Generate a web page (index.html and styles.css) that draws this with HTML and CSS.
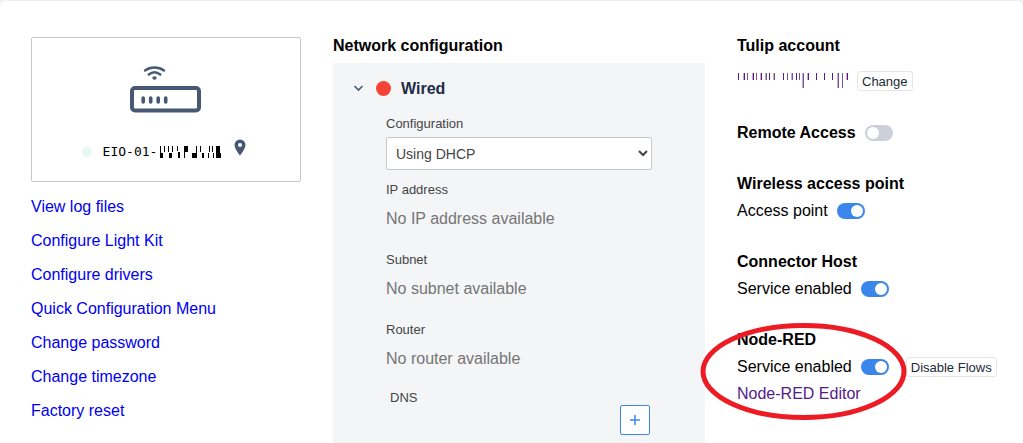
FILE: index.html
```html
<!DOCTYPE html>
<html lang="en">
<head>
    <meta charset="utf-8">
    <meta name="viewport" content="width=device-width, initial-scale=1.0">
    <title>Edge IO Configuration</title>
    <link rel="stylesheet" href="styles.css">
</head>

<body>
    <main class="page">
        <div class="device-column">
            <div class="device-card">
                <svg class="router-icon" width="72" height="50" viewBox="0 0 72 50" fill="none" stroke="#475872" stroke-linecap="round">
                    <rect x="2" y="23" width="67" height="22.500" rx="3" stroke-width="4"/>
                    <path d="M13.2 33v4M20.7 33v4M28.2 33v4M35.7 33v4" stroke-width="3.6"/>
                    <path d="M15 5.5c5.500-4 13.500-4 19 0M18.700 9.500c3.500-2.700 8.100-2.700 11.600 0" stroke-width="2.400"/>
                    <ellipse cx="24.500" cy="13" rx="2.200" ry="1.800" fill="#475872" stroke="none"/>
                </svg>
                <div class="device-name">
                    <span class="device-status"></span>
                    <span class="device-id">EIO-01-<svg class="device-serial" width="62" height="14" viewBox="0 0 62 14" shape-rendering="crispEdges">
                        <path d="M0 1h1v7h2v5H0zM4 1h1v6H4zM8 1h1v6H8zM9 8h3v5H9zM12 1h1v6h-1zM17 1h1v5h-1zM18 7h2v6h-2zM24 1h4v6h-3v6h-1zM36 1h1v7h-1zM32 8h5v5h-5zM40 1h1v6h-1zM42 8h2v5h-2zM49 1h1v6h-1zM52 1h1v6h-1zM48 8h1v5h-1zM53 8h1v5h-1zM56 1h4v7h1v5h-5z"/>
                    </svg></span>
                    <svg class="pin-icon" width="12" height="17" viewBox="0 0 12 17">
                        <path fill="#475872" fill-rule="evenodd" d="M6 .5A5.500 5.500 0 0 0 .5 6C.5 10 6 16.500 6 16.500S11.500 10 11.500 6A5.500 5.500 0 0 0 6 .5zM6 8a2 2 0 1 1 0-4 2 2 0 0 1 0 4z"/>
                    </svg>
                </div>
            </div>
            <nav class="device-links">
                <a href="#">View log files</a>
                <a href="#">Configure Light Kit</a>
                <a href="#">Configure drivers</a>
                <a href="#">Quick Configuration Menu</a>
                <a href="#">Change password</a>
                <a href="#">Change timezone</a>
                <a href="#">Factory reset</a>
            </nav>
        </div>

        <div class="network-column">
            <h2>Network configuration</h2>
            <section class="network-panel">
                <div class="network-title">
                    <svg width="11" height="7" viewBox="0 0 11 7" fill="none" stroke="#475872" stroke-width="1.6">
                        <path d="M1.500 1l4 4 4-4"/>
                    </svg>
                    <span class="network-status"></span>
                    <h3>Wired</h3>
                </div>
                <div class="network-fields">
                    <label class="field-label" for="configuration">Configuration</label>
                    <select class="field-select" id="configuration">
                        <option>Using DHCP</option>
                        <option>Static IP</option>
                    </select>
                    <dl class="field-list">
                        <dt class="field-label">IP address</dt>
                        <dd>No IP address available</dd>
                        <dt class="field-label">Subnet</dt>
                        <dd>No subnet available</dd>
                        <dt class="field-label">Router</dt>
                        <dd>No router available</dd>
                    </dl>
                    <div class="dns">
                        <span class="field-label">DNS</span>
                        <button class="add-button" type="button" aria-label="Add DNS">
                            <svg width="12" height="12" viewBox="0 0 12 12" stroke="#3b86eb" stroke-width="1.5">
                                <path d="M6 1v10M1 6h10"/>
                            </svg>
                        </button>
                    </div>
                </div>
            </section>
        </div>

        <div class="services-column">
            <section class="account">
                <h2>Tulip account</h2>
                <div class="service-row">
                    <svg class="account-name" width="113" height="16" viewBox="0 0 113 16" shape-rendering="crispEdges">
                        <path stroke="#551a8b" d="M1.500 0v7M7.500 0v7M16.500 0v7M24.500 0v7M32.500 0v7M46.500 0v7M59.500 0v7M71.500 0v7M79.500 0v7M87.500 0v7M95.500 0v7M110.500 0v7"/>
                        <path stroke="#6a55b0" d="M10.500 0v7M19.500 0v7M29.500 0v7M37.500 0v7M50.500 0v7M55.500 0v7M62.500 0v7M66.500 0v15M101.500 0v15M105.500 0v15"/>
                        <path stroke="#d9a5b5" d="M6.500 0v7M15.500 0v7M23.500 0v7M28.500 0v7M36.500 0v7M54.500 0v7M65.500 0v15M70.500 0v7M100.500 0v15M109.500 0v7"/>
                    </svg>
                    <button class="small-button" type="button">Change</button>
                </div>
            </section>
            <section>
                <div class="service-row">
                    <h2><label for="remote-access">Remote Access</label></h2>
                    <input class="toggle" type="checkbox" id="remote-access">
                </div>
            </section>
            <section>
                <h2>Wireless access point</h2>
                <div class="service-row">
                    <label for="access-point">Access point</label>
                    <input class="toggle" type="checkbox" id="access-point" checked>
                </div>
            </section>
            <section>
                <h2>Connector Host</h2>
                <div class="service-row">
                    <label for="connector-host">Service enabled</label>
                    <input class="toggle" type="checkbox" id="connector-host" checked>
                </div>
            </section>
            <section class="node-red">
                <h2>Node-RED</h2>
                <div class="service-row">
                    <label for="node-red">Service enabled</label>
                    <input class="toggle" type="checkbox" id="node-red" checked>
                    <button class="small-button flows-button" type="button">Disable Flows</button>
                </div>
                <a class="editor-link" href="#">Node-RED Editor</a>
                <svg class="highlight" width="208" height="98" viewBox="0 0 208 98" fill="none" stroke="#ed1c24" stroke-width="5">
                    <ellipse cx="103.500" cy="48.500" rx="100.500" ry="46"/>
                </svg>
            </section>
        </div>
    </main>
</body>

</html>
```

FILE: styles.css
```css
* {
    box-sizing: border-box;
}

body {
    margin: 0;
    background-color: #f0f0f1;
    font-family: "Liberation Sans", Arial, sans-serif;
    font-size: 16px;
    line-height: 18px;
    color: #000;
}

h2, h3 {
    margin: 0;
    font-size: 16px;
    font-weight: bold;
}

svg {
    display: block;
    flex: none;
}

.page {
    display: grid;
    grid-template-columns: 45fr 62fr 45fr;
    column-gap: 32px;
    min-height: calc(100vh - 1px);
    margin-top: 1px;
    padding: 36px 16px 0 31px;
    border-radius: 6px 6px 0 0;
    background-color: #fff;
}

/* Device */
.device-card {
    display: flex;
    flex-direction: column;
    align-items: center;
    gap: 24px;
    padding: 27px 0 22px;
    border: 1px solid #c8c8c8;
    border-radius: 2px;
}

.device-name {
    display: flex;
    align-items: center;
    height: 20px;
    padding-right: 4px;
}

.device-status {
    width: 10px;
    height: 10px;
    margin: 6px 11px 0 0;
    border-radius: 50%;
    background-color: #e8f9f2;
}

.device-id {
    display: flex;
    align-items: center;
    gap: 3px;
    margin: 6px 12px 0 0;
    font-family: "DejaVu Sans Mono", monospace;
    font-size: 13px;
}

.pin-icon {
    margin-bottom: 4px;
}

.device-links {
    display: flex;
    flex-direction: column;
    align-items: flex-start;
    gap: 16px;
    margin-top: 16px;
}

.device-links a {
    color: #0000ee;
    text-decoration: none;
}

/* Network */
.network-column {
    display: flex;
    flex-direction: column;
    gap: 8px;
}

.network-panel {
    flex: 1;
    padding: 13px 0 8px;
    background-color: #f3f5f7;
}

.network-title {
    display: flex;
    align-items: center;
    height: 25px;
    padding-left: 20px;
}

.network-status {
    width: 15px;
    height: 15px;
    margin: 0 10px 0 12px;
    border-radius: 50%;
    background-color: #f44336;
}

.network-title h3 {
    color: #212b45;
}

.network-fields {
    padding: 15px 53px 0;
}

.field-label {
    display: block;
    font-size: 13px;
    line-height: 16px;
    color: #444;
}

.field-select {
    display: block;
    width: 100%;
    height: 33px;
    margin-top: 5px;
    padding: 0 5px;
    border: 1px solid #c8c8c8;
    border-radius: 2px;
    background-color: #fff;
    font-family: inherit;
    font-size: 14px;
    color: #444;
}

.field-list {
    margin: 12px 0 21px;
}

.field-list dd {
    margin: 11px 0 23px;
    line-height: 20px;
    color: #757575;
}

.field-list dd:last-child {
    margin-bottom: 0;
}

.dns {
    display: flex;
    justify-content: space-between;
    padding: 0 2px 0 4px;
}

.add-button {
    display: flex;
    align-items: center;
    justify-content: center;
    width: 30px;
    height: 30px;
    margin-top: 15px;
    padding: 0;
    border: 1px solid #3b86eb;
    border-radius: 2px;
    background-color: #fff;
}

/* Services */
.services-column {
    display: flex;
    flex-direction: column;
    gap: 32px;
    white-space: nowrap;
}

.service-row {
    display: flex;
    align-items: center;
    gap: 9px;
    height: 20px;
}

h2 + .service-row {
    margin-top: 8px;
}

.account h2 + .service-row {
    gap: 7px;
    margin-top: 16px;
}

.small-button {
    height: 20px;
    padding: 0 4px;
    border: 1px solid #e6e6e6;
    border-radius: 3px;
    background-color: #fff;
    font-family: inherit;
    font-size: 13px;
    color: #212b36;
}

.flows-button {
    margin-left: 8px;
}

.toggle {
    appearance: none;
    display: flex;
    align-items: center;
    width: 28px;
    height: 16px;
    margin: 0;
    padding: 0 2px;
    border-radius: 8px;
    background-color: #cdd0d9;
}

.toggle::before {
    content: "";
    width: 12px;
    height: 12px;
    border-radius: 50%;
    background-color: #fff;
}

.toggle:checked {
    justify-content: flex-end;
    background-color: #3b86eb;
}

.node-red {
    position: relative;
}

.editor-link {
    display: inline-block;
    margin-top: 8px;
    color: #551a8b;
    text-decoration: none;
}

/* Hand drawn ring over the Node-RED settings */
.highlight {
    position: absolute;
    top: -8px;
    left: -37px;
    pointer-events: none;
}
```
